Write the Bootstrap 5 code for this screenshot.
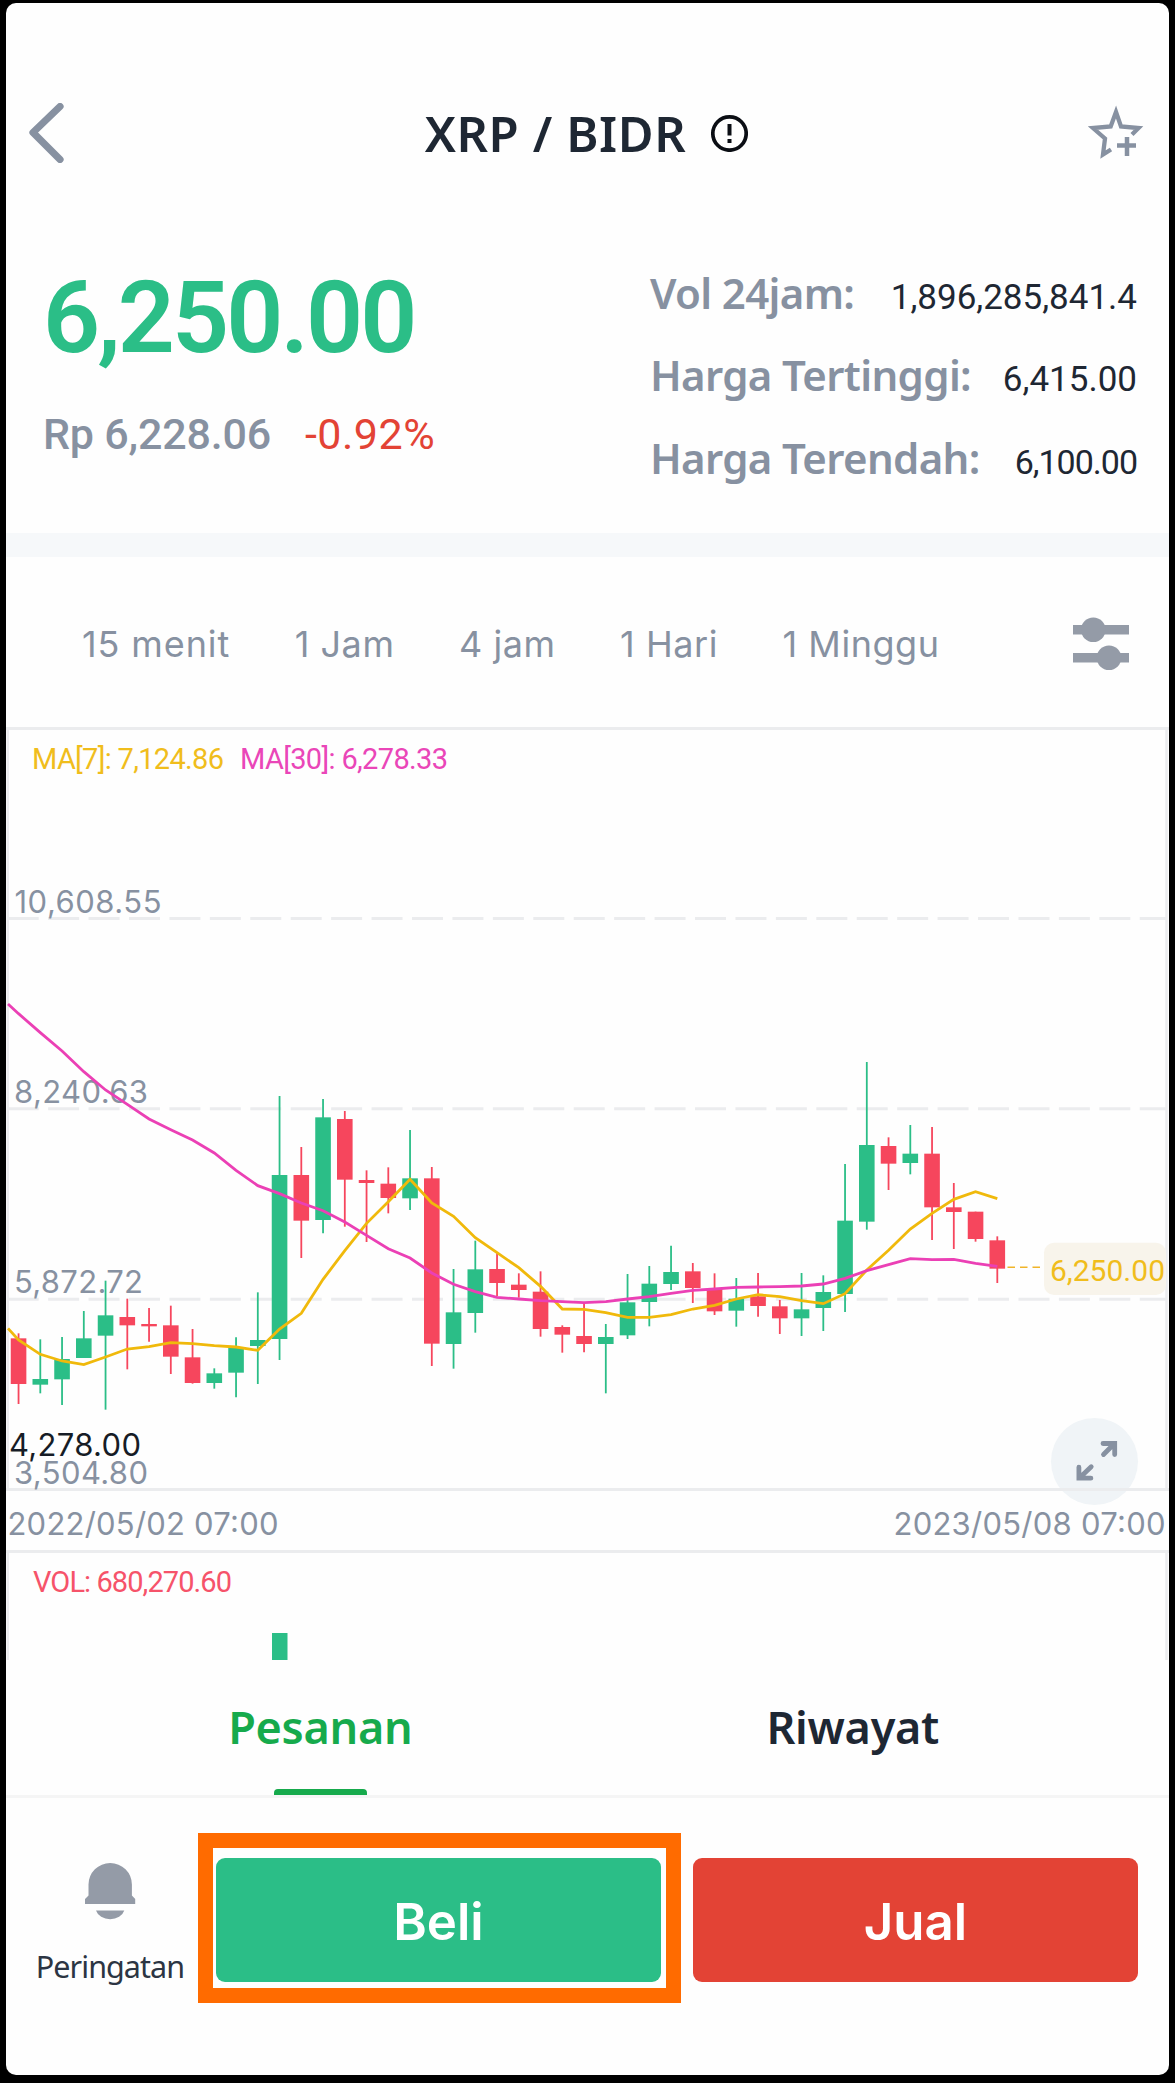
<!DOCTYPE html>
<html lang="id">
<head>
<meta charset="utf-8">
<meta name="viewport" content="width=device-width, initial-scale=1">
<title>XRP / BIDR</title>
<link href="https://cdn.jsdelivr.net/npm/bootstrap@5.3.0/dist/css/bootstrap.min.css" rel="stylesheet">
<style>
  :root { --ink:#1e2733; --slate:#8791a1; --up:#2bbe87; --down:#f6465d; --sell:#e34335; --tab:#16aa4c; }
  body { background:#000; width:1175px; height:2083px; overflow:hidden; padding:3px 6px 8px; font-family:"Noto Sans",sans-serif; color:var(--ink); }
  svg { display:block; flex:none; }
  .screen { background:#fefefe; height:2072px; width:1163px; border-radius:10px; overflow:hidden; }
  .topbar { height:259px; padding:0 24px 0 22px; }
  .side { width:57px; }
  .pair { font-size:49px; font-weight:600; line-height:60px; letter-spacing:.6px; white-space:nowrap; }
  .din { font-family:Roboto,sans-serif; }
  .stats { height:271px; padding:0 32px 0 37px; }
  .price { font-size:100px; line-height:100px; font-weight:600; color:var(--up); margin:6px 0 36px; letter-spacing:-2.9px; }
  .fiat { font-size:43px; line-height:60px; gap:34px; }
  .fiat-idr { color:var(--slate); letter-spacing:-.2px; }
  .fiat-pct { color:var(--sell); letter-spacing:.5px; }
  .facts { width:487px; gap:22.3px; line-height:60px; padding-top:1px; }
  .facts > div { height:60px; }
  .fact-name { font-size:42px; font-weight:600; color:var(--slate); letter-spacing:-.65px; }
  .fact-val { font-size:35px; }
  .facts > div:last-child .fact-val { font-size:34px; letter-spacing:-1px; }
  .band { height:24px; background:#f6f8fa; }
  .periods { height:170px; padding:3px 40px 0 76px; gap:64.5px; font:400 36px/50px Inter,sans-serif; letter-spacing:.55px; color:var(--slate); }
  .periods span:first-child { letter-spacing:.9px; }
  .orders { height:138px; border-bottom:3px solid #f5f5f5; padding:0 50px 0 48px; font-size:45px; font-weight:600; letter-spacing:-.3px; }
  .orders a { color:var(--ink); text-decoration:none; line-height:124px; padding-top:5px; height:135px; text-align:center; }
  .orders .current { color:var(--tab); display:flex; flex-direction:column; align-items:center; }
  .current i { width:93px; height:6px; border-radius:4px 4px 0 0; background:var(--tab); }
  .trade { height:277px; padding:60px 31px 0 28px; }
  .alarm { width:152px; font-size:30.5px; letter-spacing:-.95px; line-height:40px; color:#2c3543; }
  .deal { width:445px; height:124px; border-radius:9px; border:0; color:#fff; font:600 51px/1 Inter,sans-serif; padding:2px 0 0; }
  .buy { background:var(--up); position:relative; }
  .buy::after { content:""; position:absolute; inset:-25px -19.5px -20.5px -18.5px; border:15px solid #ff6b00; }
  .sell { background:var(--sell); margin-left:32px; }
  .axis { font:31px Inter,sans-serif; fill:var(--slate); }
  .legend-din { font:29px Roboto,sans-serif; }
</style>
</head>
<body>
<main class="screen d-flex flex-column">
  <header class="topbar d-flex align-items-center justify-content-between">
    <div class="side"><svg width="36" height="60" viewBox="0 0 36 60"><path d="M32 3.500 5 29.500 32 56.500" fill="none" stroke="#8791a1" stroke-width="7.200" stroke-linecap="round" stroke-linejoin="round"/></svg></div>
    <div class="d-flex align-items-center">
      <div class="pair">XRP / BIDR</div>
      <svg class="ms-4" width="38" height="38" viewBox="0 0 38 38"><circle cx="19.500" cy="19.500" r="16.700" fill="none" stroke="#0b0e14" stroke-width="3.700"/><path d="M19.500 10v11.500M19.500 25v4" stroke="#0b0e14" stroke-width="4"/></svg>
    </div>
    <div class="side d-flex justify-content-end"><svg width="57" height="56" viewBox="1089 105 57 56"><path d="M1133 134.500 1139.500 128 1122 126.500 1117 112 1111.700 126.500 1094 128 1106 138.500 1104 154.500 1112 149.500" fill="none" stroke="#8791a1" stroke-width="4.300"/><path d="M1118 145.600h19M1128 137v19" stroke="#8791a1" stroke-width="4.500"/></svg></div>
  </header>

  <section class="stats d-flex justify-content-between">
    <div>
      <div class="price din">6,250.00</div>
      <div class="fiat din d-flex"><span class="fiat-idr fw-medium">Rp 6,228.06</span><span class="fiat-pct">-0.92%</span></div>
    </div>
    <div class="facts d-flex flex-column">
      <div class="d-flex justify-content-between align-items-baseline"><span class="fact-name">Vol 24jam:</span><span class="fact-val din">1,896,285,841.4</span></div>
      <div class="d-flex justify-content-between align-items-baseline"><span class="fact-name">Harga Tertinggi:</span><span class="fact-val din">6,415.00</span></div>
      <div class="d-flex justify-content-between align-items-baseline"><span class="fact-name">Harga Terendah:</span><span class="fact-val din">6,100.00</span></div>
    </div>
  </section>

  <div class="band"></div>

  <nav class="periods d-flex align-items-center">
    <span>15 menit</span><span>1 Jam</span><span>4 jam</span><span>1 Hari</span><span>1 Minggu</span>
    <svg class="ms-auto" width="56" height="54" viewBox="1073 616 56 54" fill="#949ba7"><path d="M1073 624h56v9.500h-56zM1073 652h56v9.500h-56z"/><circle cx="1093.300" cy="628.700" r="12.300"/><circle cx="1109" cy="656.700" r="12.300"/></svg>
  </nav>

  <svg id="chart" width="1163" height="933" viewBox="6 727 1163 933">
    <circle cx="1094.500" cy="1461.500" r="43.500" fill="#f0f4f7"/>
    <g fill="none" stroke="#ebecee" stroke-width="3">
      <path d="M6 728.500h1163M6 1489.500h1163M6 1551.500h1163"/>
      <path d="M7.700 728v762M1166.500 728v762M7.700 1551v109M1166.500 1551v109" stroke-width="2.500"/>
      <path d="M7.700 918.600H1166M7.700 1108.700H1166M7.700 1299.300H1166" stroke-dasharray="31 9.430"/>
    </g>
    <g class="axis">
      <text x="14.500" y="912.500" textLength="147">10,608.55</text>
      <text x="14" y="1103" textLength="134">8,240.63</text>
      <text x="14" y="1293" textLength="129">5,872.72</text>
      <text x="9" y="1455.500" textLength="132" style="fill:#161c26">4,278.00</text>
      <text x="14" y="1483.500" textLength="134">3,504.80</text>
      <text x="7.500" y="1535" textLength="271">2022/05/02 07:00</text>
      <text x="893.500" y="1535" textLength="272">2023/05/08 07:00</text>
    </g>
    <g class="legend-din">
      <text x="32" y="769" textLength="192" fill="#f0bd1c">MA[7]: 7,124.86</text>
      <text x="240" y="769" textLength="208" fill="#ea46b8">MA[30]: 6,278.33</text>
      <text x="33" y="1592" textLength="199" fill="#f6536a">VOL: 680,270.60</text>
    </g>
    <rect x="272" y="1633" width="15.500" height="27" fill="#2bbe87"/>
    <g id="candles"></g>
    <path d="M1007.500 1267.300h33" stroke="#f0b429" stroke-width="1.500" stroke-dasharray="7.500 5"/>
    <rect x="1044" y="1242.700" width="122" height="52.300" rx="10" fill="#f8f4eb"/>
    <text x="1050" y="1281" textLength="115" font-family="Roboto" font-size="30" fill="#f0bd1c">6,250.00</text>
    <path d="M1103.500 1454.500 1113 1445M1103 1443.500h11.700v11M1091.200 1466.700 1081 1476.500M1078.900 1467.200v11h12" fill="none" stroke="#8791a1" stroke-width="4.800" stroke-linecap="round"/>
  </svg>

  <nav class="orders d-flex">
    <a class="current w-50" href="#">Pesanan<i></i></a>
    <a class="w-50" href="#">Riwayat</a>
  </nav>

  <footer class="trade d-flex">
    <div class="alarm d-flex flex-column align-items-center">
      <svg class="mt-1 mb-4" width="52" height="60" viewBox="84 1862 52 60" fill="#949ba7"><path d="M88.500 1884.500a21.700 21.500 0 0 1 43.400 0v11l3.300 3.500v5H85v-5l3.500-3.500zM96 1910.500h28.300a14.600 11.500 0 0 1-28.300 0z"/></svg>
      <span>Peringatan</span>
    </div>
    <button class="btn deal buy ms-auto">Beli</button>
    <button class="btn deal sell">Jual</button>
  </footer>
</main>
<script>
  // Each row: direction, high, body top, body bottom, low, MA7, MA30 (thirds of a pixel below y=1000)
  const rows = [
    ['r',1000,1015,1152,1212,1020,41],['g',1018,1137,1154,1180,1063,98],['g',1011,1077,1138,1215,1083,153],
    ['g',933,1015,1074,1074,1094,215],['g',842,946,1007,1229,1071,270],['r',896,951,976,1108,1047,313],
    ['r',924,972,979,1025,1040,357],['r',917,976,1070,1122,1028,389],['r',987,1072,1149,1151,1031,420],
    ['g',1105,1120,1149,1166,1037,459],['g',1012,1042,1118,1192,1041,511],['g',877,1020,1038,1152,1051,557],
    ['g',288,525,1017,1080,987,581],['r',441,525,662,774,940,609],['g',297,352,660,700,838,632],
    ['r',333,357,539,680,752,666],['r',511,540,549,726,670,706],['r',502,551,594,640,605,746],
    ['g',390,535,595,630,538,774],['r',501,535,1031,1098,609,819],['g',807,937,1032,1106,649,853],
    ['g',722,808,939,998,713,875],['r',760,807,849,888,758,892],['r',820,854,870,893,803,897],
    ['r',814,875,987,1010,859,902],['r',976,981,1004,1058,927,905],['r',908,1008,1032,1057,928,908],
    ['g',972,1011,1032,1180,938,905],['g',822,907,1006,1017,952,897],['g',798,851,906,979,952,890],
    ['g',737,816,852,870,944,880],['r',789,814,864,909,927,871],['r',820,867,934,945,916,867],
    ['g',834,896,932,980,897,862],['r',819,889,918,950,884,861],['r',900,919,955,1002,890,860],
    ['g',819,928,955,1008,902,858],['g',826,876,924,993,911,852],['g',492,662,882,936,881,835],
    ['g',186,435,665,689,810,812],['r',412,438,491,570,751,794],['g',375,461,489,523,687,776],
    ['r',381,461,622,720,640,779],['r',549,622,636,747,598,778],['r',635,635,717,725,575,790],
    ['r',709,721,806,849,596,799]];
  const px = i => +(18.55 + i * 21.75).toFixed(2), py = v => +(1000 + v / 3).toFixed(2);
  let out = '', ma7 = `8,${py(985)}`, ma30 = `8,${py(12)}`;
  rows.forEach(([d, hi, top, bot, lo, a, b], i) => {
    const c = d === 'g' ? '#2bbe87' : '#f6465d', x = px(i);
    out += `<path d="M${x} ${py(hi)}V${py(lo)}" stroke="${c}" stroke-width="1.8"/><rect x="${x - 7.8}" y="${py(top)}" width="15.6" height="${(bot - top) / 3}" fill="${c}"/>`;
    ma7 += ` ${x},${py(a)}`; ma30 += ` ${x},${py(b)}`;
  });
  out += `<polyline points="${ma7}" fill="none" stroke="#f0b90b" stroke-width="2.8"/><polyline points="${ma30}" fill="none" stroke="#eb40b5" stroke-width="2.8"/>`;
  document.getElementById('candles').innerHTML = out;
</script>
<script src="https://cdn.jsdelivr.net/npm/bootstrap@5.3.0/dist/js/bootstrap.bundle.min.js"></script>
</body>
</html>
